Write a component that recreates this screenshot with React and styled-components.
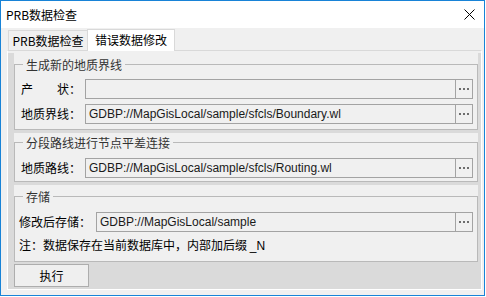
import styled, { createGlobalStyle } from "styled-components";

const GlobalStyle = createGlobalStyle`
  html, body {
    margin: 0;
    padding: 0;
    background: #ffffff;
  }
  * {
    box-sizing: border-box;
  }
`;

const FONT = `"Noto Sans CJK SC", "Microsoft YaHei", sans-serif`;
const PATH_FONT = `"Liberation Sans", "Noto Sans CJK SC", sans-serif`;

const App = () => {
  return (
    <>
      <GlobalStyle />
      <StWindow>
        <StTitleBar>
          <StTitle>PRB数据检查</StTitle>
          <StClose>
            <svg width="11" height="11" viewBox="0 0 11 11">
              <path d="M0.5 0.5 L10.5 10.5 M10.5 0.5 L0.5 10.5" stroke="#000" strokeWidth="1" fill="none" />
            </svg>
          </StClose>
        </StTitleBar>

        <StClient>
          <StTabStrip>
            <StTab>PRB数据检查</StTab>
            <StTab active>错误数据修改</StTab>
          </StTabStrip>

          <StPage>
            <StPageBody>
              {/* ------------------------- 生成新的地质界线 ------------------------- */}
              <GroupBox title="生成新的地质界线" lineTop={11} bodyPadTop={3} bodyPadBottom={5}>
                <StRow pad={6}>
                  <StLabel width={64}>产　　状：</StLabel>
                  <Field value="" />
                </StRow>
                <StRow pad={6} gap={5}>
                  <StLabel width={64}>地质界线：</StLabel>
                  <Field value="GDBP://MapGisLocal/sample/sfcls/Boundary.wl" />
                </StRow>
              </GroupBox>

              {/* ------------------------ 分段路线进行节点平差连接 ------------------------ */}
              <GroupBox title="分段路线进行节点平差连接" lineTop={9} bodyPadTop={6} bodyPadBottom={3}>
                <StRow pad={6}>
                  <StLabel width={64}>地质路线：</StLabel>
                  <Field value="GDBP://MapGisLocal/sample/sfcls/Routing.wl" />
                </StRow>
              </GroupBox>

              {/* ------------------------------ 存储 ------------------------------ */}
              <GroupBox title="存储" lineTop={11} bodyPadTop={4} bodyPadBottom={7}>
                <StRow pad={4}>
                  <StLabel width={77}>修改后存储：</StLabel>
                  <Field value="GDBP://MapGisLocal/sample" />
                </StRow>
                <StNote>
                  注：数据保存在当前数据库中，内部加后缀 <StSuffix>_N</StSuffix>
                </StNote>
              </GroupBox>

              <StActions>
                <StButton>执行</StButton>
              </StActions>
            </StPageBody>
          </StPage>
        </StClient>
      </StWindow>
    </>
  );
};

const GroupBox = ({ title, lineTop, bodyPadTop, bodyPadBottom, children }) => (
  <StGroup>
    <StGroupHead lineTop={lineTop}>
      <StCornerLeft lineTop={lineTop} />
      <StGroupTitle>{title}</StGroupTitle>
      <StCornerRight lineTop={lineTop} />
    </StGroupHead>
    <StGroupBody padTop={bodyPadTop} padBottom={bodyPadBottom}>
      {children}
    </StGroupBody>
  </StGroup>
);

const Field = ({ value }) => (
  <StField>
    <StFieldText>{value}</StFieldText>
    <StBrowse>
      <i />
      <i />
      <i />
    </StBrowse>
  </StField>
);

const StWindow = styled.div`
  width: 485px;
  height: 296px;
  border: 1px solid #1883d7;
  background: #f0f0f0;
  display: flex;
  flex-direction: column;
  font-family: ${FONT};
  font-size: 12px;
  color: #000;
`;

const StTitleBar = styled.div`
  height: 27px;
  flex-shrink: 0;
  background: #ffffff;
  display: flex;
  align-items: center;
  justify-content: space-between;
  padding: 0 9px 0 5px;
`;

const StTitle = styled.span`
  font-size: 12px;
  line-height: 27px;
  color: #000;
`;

const StClose = styled.span`
  display: flex;
  width: 11px;
  height: 11px;
`;

const StClient = styled.div`
  flex: 1;
  display: flex;
  flex-direction: column;
  padding: 1px 2px 5px 6px;
`;

const StTabStrip = styled.div`
  height: 21px;
  flex-shrink: 0;
  display: flex;
  align-items: flex-end;
  padding-left: 1px;
`;

const StTab = styled.div`
  position: relative;
  z-index: ${({ active }) => (active ? 1 : 0)};
  height: ${({ active }) => (active ? "22px" : "20px")};
  margin-bottom: ${({ active }) => (active ? "-1px" : "0")};
  margin-left: ${({ active }) => (active ? "-1px" : "0")};
  width: ${({ active }) => (active ? "88px" : "80px")};
  background: ${({ active }) => (active ? "#ffffff" : "#f0f0f0")};
  border: 1px solid #d9d9d9;
  border-bottom: none;
  display: flex;
  align-items: center;
  justify-content: center;
  padding-bottom: ${({ active }) => (active ? "2px" : "0")};
  line-height: 16px;
  white-space: nowrap;
`;

const StPage = styled.div`
  flex: 1;
  display: flex;
  flex-direction: column;
  border: 1px solid #ffffff;
  border-top-color: #d9d9d9;
  padding-top: 2px;
  background: #f0f0f0;
`;

const StPageBody = styled.div`
  flex: 1;
  display: flex;
  flex-direction: column;
  gap: 3px;
  background: #dadada;
  padding: 0 3px 0 6px;
`;

const StGroup = styled.div`
  display: flex;
  flex-direction: column;
  background: #f0f0f0;
`;

const StGroupHead = styled.div`
  height: ${({ lineTop }) => lineTop * 2 + 1}px;
  display: flex;
  align-items: center;
`;

const StCornerLeft = styled.div`
  width: 9px;
  align-self: stretch;
  margin-top: ${({ lineTop }) => lineTop}px;
  border-top: 1px solid #b9b9b9;
  border-left: 1px solid #b9b9b9;
`;

const StCornerRight = styled.div`
  flex: 1;
  align-self: stretch;
  margin-top: ${({ lineTop }) => lineTop}px;
  border-top: 1px solid #b9b9b9;
  border-right: 1px solid #b9b9b9;
`;

const StGroupTitle = styled.span`
  padding: 0 3px;
  line-height: 16px;
  color: #333;
  white-space: nowrap;
`;

const StGroupBody = styled.div`
  display: flex;
  flex-direction: column;
  border: 1px solid #b9b9b9;
  border-top: none;
  padding: ${({ padTop }) => padTop}px 4px ${({ padBottom }) => padBottom}px 0;
`;

const StRow = styled.div`
  display: flex;
  align-items: center;
  padding-left: ${({ pad }) => pad}px;
  margin-top: ${({ gap }) => gap || 0}px;
`;

const StLabel = styled.span`
  width: ${({ width }) => width}px;
  flex-shrink: 0;
  line-height: 16px;
  white-space: nowrap;
`;

const StField = styled.div`
  flex: 1;
  height: 20px;
  display: flex;
  border: 1px solid #a3a3a3;
  background: #f0f0f0;
`;

const StFieldText = styled.span`
  flex: 1;
  padding-left: 3px;
  font-family: ${PATH_FONT};
  line-height: 18px;
  color: #1a1a1a;
  white-space: nowrap;
  overflow: hidden;
`;

const StBrowse = styled.span`
  width: 17px;
  flex-shrink: 0;
  border-left: 1px solid #a3a3a3;
  display: flex;
  align-items: center;
  justify-content: center;
  gap: 2px;

  i {
    width: 2px;
    height: 2px;
    background: #6d6d6d;
  }
`;

const StNote = styled.div`
  margin-top: 4px;
  padding-left: 4px;
  height: 18px;
  line-height: 18px;
  white-space: nowrap;
`;

const StSuffix = styled.span`
  font-family: ${PATH_FONT};
`;

const StActions = styled.div`
  flex: 1;
  display: flex;
  align-items: flex-start;
  margin-top: -3px;
`;

const StButton = styled.button`
  width: 75px;
  height: 23px;
  margin-top: 2px;
  border: 1px solid #adadad;
  background: #efefef;
  font-family: ${FONT};
  font-size: 12px;
  color: #000;
  padding: 0;
  line-height: 16px;
`;

export default App;
